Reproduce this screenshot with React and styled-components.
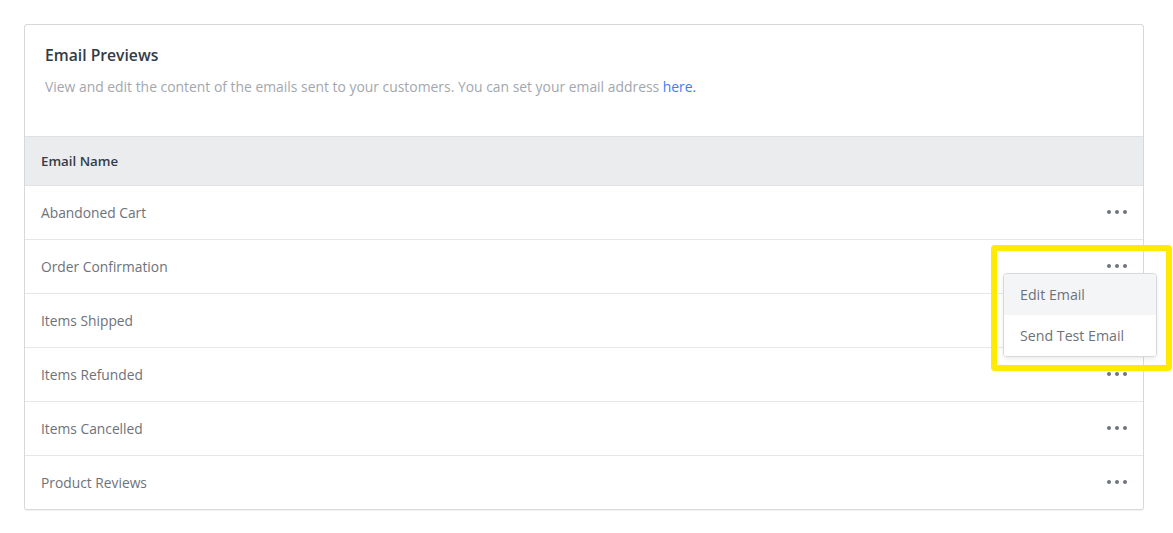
import React from "react";
import styled, { createGlobalStyle } from "styled-components";

const Global = createGlobalStyle`
  html, body { margin: 0; padding: 0; background: #ffffff; }
  body { font-family: "Open Sans", "Liberation Sans", sans-serif; -webkit-font-smoothing: antialiased; }
  * { box-sizing: border-box; }
`;

const Page = styled.div`
  padding: 24px 29px 24px 24px;
  width: 1173px;
  height: 533px;
`;

const Card = styled.div`
  width: 1120px;
  border: 1px solid #d6d8db;
  border-radius: 3px;
  box-shadow: 0 1px 1px rgba(0, 0, 0, 0.06);
  background: #fff;
`;

const Header = styled.div`
  height: 112px;
  padding: 20px 20px 0 20px;
  border-bottom: 1px solid #dfe1e4;
`;

const Title = styled.h2`
  margin: 0;
  font-size: 15.7px;
  font-weight: 600;
  color: #323b46;
  line-height: 20px;
`;

const Desc = styled.p`
  margin: 12px 0 0 0;
  font-size: 13.9px;
  color: #a3a7ad;
  line-height: 20px;
`;

const Link = styled.a`
  color: #3d7ef2;
  text-decoration: none;
`;

const TableHead = styled.div`
  height: 49px;
  display: flex;
  align-items: center;
  padding: 0 16px;
  background: #ebecee;
  border-bottom: 1px solid #e0e2e5;
  font-size: 13.3px;
  font-weight: 600;
  color: #333c47;
`;

const Row = styled.div`
  position: relative;
  height: ${(p) => (p.$last ? "53px" : "54px")};
  display: flex;
  align-items: center;
  justify-content: space-between;
  padding: 0 16px 0 16px;
  border-bottom: ${(p) => (p.$last ? "none" : "1px solid #e6e7ea")};
  font-size: 13.8px;
  color: #6d727a;
`;

const Dots = styled.button`
  display: flex;
  gap: 4px;
  background: none;
  border: none;
  padding: 4px 0;
  cursor: pointer;
  margin-top: -1px;
`;

const Dot = styled.span`
  width: 4px;
  height: 4px;
  border-radius: 50%;
  background: #6f747c;
`;

const Menu = styled.div`
  position: absolute;
  top: 33px;
  right: -14px;
  width: 154px;
  background: #fff;
  border: 1px solid #d7d9dc;
  border-radius: 4px;
  box-shadow: 0 2px 4px rgba(0, 0, 0, 0.08);
  overflow: hidden;
  z-index: 2;
`;

const MenuItem = styled.div`
  height: 41px;
  display: flex;
  align-items: center;
  padding-left: 16px;
  font-size: 14.2px;
  color: #6d727a;
  background: ${(p) => (p.$active ? "#f4f5f6" : "#fff")};
`;

const Highlight = styled.div`
  position: absolute;
  top: 5px;
  right: -29px;
  width: 181px;
  height: 126px;
  border: 6px solid #ffea00;
  border-radius: 4px;
  pointer-events: none;
  z-index: 3;
`;

const emails = [
  "Abandoned Cart",
  "Order Confirmation",
  "Items Shipped",
  "Items Refunded",
  "Items Cancelled",
  "Product Reviews",
];

function MoreButton() {
  return (
    <Dots aria-label="More actions">
      <Dot />
      <Dot />
      <Dot />
    </Dots>
  );
}

export default function App() {
  return (
    <>
      <Global />
      <Page>
        <Card>
          <Header>
            <Title>Email Previews</Title>
            <Desc>
              View and edit the content of the emails sent to your customers. You can set your email address{" "}
              <Link href="#">here.</Link>
            </Desc>
          </Header>
          <TableHead>Email Name</TableHead>
          {emails.map((name, i) => (
            <Row key={name} $last={i === emails.length - 1}>
              <span>{name}</span>
              <MoreButton />
              {i === 1 && (
                <>
                  <Menu>
                    <MenuItem $active>Edit Email</MenuItem>
                    <MenuItem>Send Test Email</MenuItem>
                  </Menu>
                  <Highlight />
                </>
              )}
            </Row>
          ))}
        </Card>
      </Page>
    </>
  );
}
